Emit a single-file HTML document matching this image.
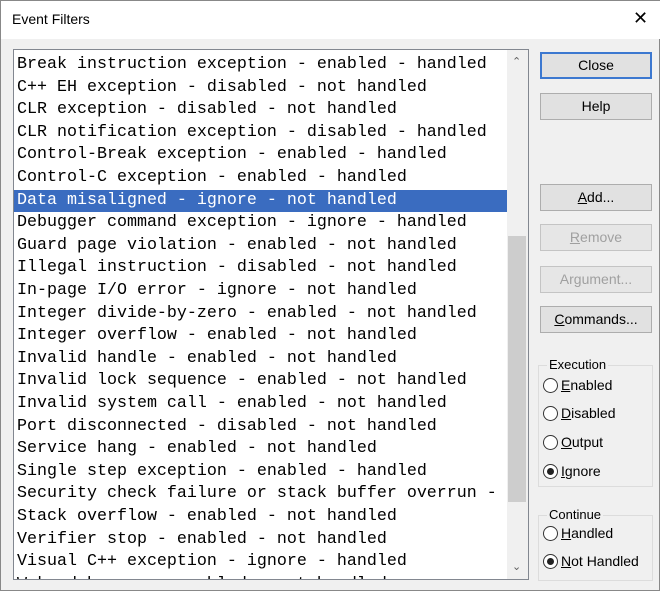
<!DOCTYPE html>
<html><head><style>
*{margin:0;padding:0;box-sizing:border-box}
body{width:660px;height:591px;background:#f0f0f0;font-family:"Liberation Sans",sans-serif;position:relative;overflow:hidden;border:1px solid #888}
.title{position:absolute;left:0;top:0;width:660px;height:38px;background:#fff}
.title span{position:absolute;left:11px;top:10px;font-size:14px;color:#000}
.x{position:absolute;left:632px;top:7px;font-size:18px;font-weight:300}
.list{position:absolute;left:12px;top:48px;width:516px;height:531px;background:#fff;border:1px solid #828790;overflow:hidden}
.row{position:absolute;left:0;width:493px;height:22.6px;font-family:"Liberation Mono",monospace;font-size:16.67px;line-height:22.6px;padding-left:3px;white-space:pre;color:#000}
.sel{background:#3a6cc0;color:#fff}
.sb{position:absolute;left:493px;top:0;width:21px;height:531px;background:#f0f0f0}
.thumb{position:absolute;left:1px;top:186px;width:18px;height:266px;background:#cdcdcd}
.arr{position:absolute;left:5px;font-size:11px;color:#606060}
.btn{position:absolute;left:539px;width:112px;height:27px;background:#e1e1e1;border:1px solid #adadad;font-size:14px;text-align:center;line-height:24px;color:#000}
.dis{color:#a0a0a0;background:#e6e6e6;border-color:#c4c4c4}
.def{border:2px solid #3c78d0;line-height:22px}
.grp{position:absolute;left:537px;width:115px;border:1px solid #dcdcdc}
.gl{position:absolute;left:8px;top:-9px;background:#f0f0f0;padding:0 2px;font-size:13px}
.rad{position:absolute;left:4px;font-size:14px;white-space:nowrap}
.rad i{display:inline-block;width:15px;height:15px;border:1px solid #333;border-radius:50%;background:#fff;vertical-align:-3px;margin-right:3px;position:relative}
.rad i.on:after{content:"";position:absolute;left:3px;top:3px;width:7px;height:7px;border-radius:50%;background:#222}
u{text-decoration:underline}
</style></head><body>
<div class="title"><span>Event Filters</span><div class="x">✕</div></div>
<div class="list">
<div class="row" style="top:4px">Break instruction exception - enabled - handled</div>
<div class="row" style="top:26.6px">C++ EH exception - disabled - not handled</div>
<div class="row" style="top:49.2px">CLR exception - disabled - not handled</div>
<div class="row" style="top:71.8px">CLR notification exception - disabled - handled</div>
<div class="row" style="top:94.4px">Control-Break exception - enabled - handled</div>
<div class="row" style="top:117px">Control-C exception - enabled - handled</div>
<div class="row sel" style="top:139.6px">Data misaligned - ignore - not handled</div>
<div class="row" style="top:162.2px">Debugger command exception - ignore - handled</div>
<div class="row" style="top:184.8px">Guard page violation - enabled - not handled</div>
<div class="row" style="top:207.4px">Illegal instruction - disabled - not handled</div>
<div class="row" style="top:230px">In-page I/O error - ignore - not handled</div>
<div class="row" style="top:252.6px">Integer divide-by-zero - enabled - not handled</div>
<div class="row" style="top:275.2px">Integer overflow - enabled - not handled</div>
<div class="row" style="top:297.8px">Invalid handle - enabled - not handled</div>
<div class="row" style="top:320.4px">Invalid lock sequence - enabled - not handled</div>
<div class="row" style="top:343px">Invalid system call - enabled - not handled</div>
<div class="row" style="top:365.6px">Port disconnected - disabled - not handled</div>
<div class="row" style="top:388.2px">Service hang - enabled - not handled</div>
<div class="row" style="top:410.8px">Single step exception - enabled - handled</div>
<div class="row" style="top:433.4px">Security check failure or stack buffer overrun - </div>
<div class="row" style="top:456px">Stack overflow - enabled - not handled</div>
<div class="row" style="top:478.6px">Verifier stop - enabled - not handled</div>
<div class="row" style="top:501.2px">Visual C++ exception - ignore - handled</div>
<div class="row" style="top:523.8px">Wake debugger - enabled - not handled</div>
<div class="sb"><div class="arr" style="top:5px">&#8963;</div><div class="thumb"></div><div class="arr" style="top:510px">&#8964;</div></div>
</div>
<div class="btn def" style="top:51px">Close</div>
<div class="btn" style="top:92px">Help</div>
<div class="btn" style="top:183px"><u>A</u>dd...</div>
<div class="btn dis" style="top:223px"><u>R</u>emove</div>
<div class="btn dis" style="top:265px">Ar<u>g</u>ument...</div>
<div class="btn" style="top:305px"><u>C</u>ommands...</div>
<div class="grp" style="top:364px;height:122px"><div class="gl">Execution</div>
<div class="rad" style="top:11px"><i></i><u>E</u>nabled</div>
<div class="rad" style="top:39px"><i></i><u>D</u>isabled</div>
<div class="rad" style="top:68px"><i></i><u>O</u>utput</div>
<div class="rad" style="top:97px"><i class="on"></i><u>I</u>gnore</div>
</div>
<div class="grp" style="top:514px;height:66px"><div class="gl">Continue</div>
<div class="rad" style="top:9px"><i></i><u>H</u>andled</div>
<div class="rad" style="top:37px"><i class="on"></i><u>N</u>ot Handled</div>
</div>
</body></html>
